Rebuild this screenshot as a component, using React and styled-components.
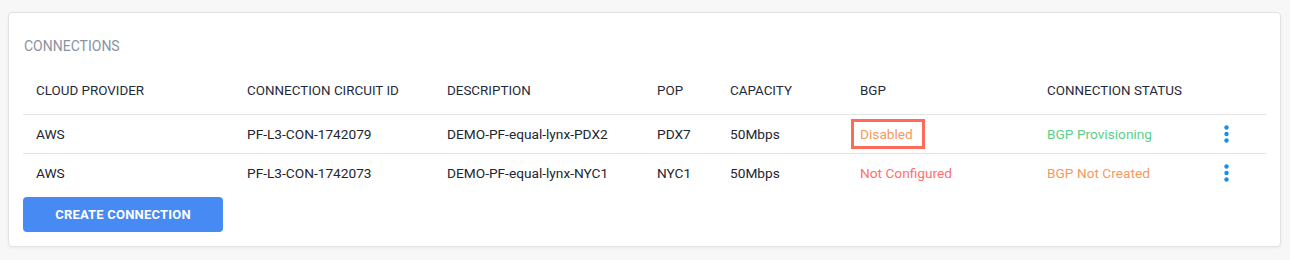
import React from "react";
import styled, { createGlobalStyle } from "styled-components";

const GlobalStyle = createGlobalStyle`
  body {
    margin: 0;
    background: #f7f7f7;
    font-family: Roboto, "Liberation Sans", sans-serif;
  }
`;

const connections = [
  {
    id: "PF-L3-CON-1742079",
    provider: "AWS",
    description: "DEMO-PF-equal-lynx-PDX2",
    pop: "PDX7",
    capacity: "50Mbps",
    bgp: "Disabled",
    bgpTone: "orange",
    highlight: true,
    status: "BGP Provisioning",
    statusTone: "green",
  },
  {
    id: "PF-L3-CON-1742073",
    provider: "AWS",
    description: "DEMO-PF-equal-lynx-NYC1",
    pop: "NYC1",
    capacity: "50Mbps",
    bgp: "Not Configured",
    bgpTone: "red",
    status: "BGP Not Created",
    statusTone: "orange",
  },
];

const tones = {
  orange: "#f7985c",
  red: "#ff6f6c",
  green: "#5ad08c",
};

const columns = "211px 200px 210px 73px 130px 187px 169px 63px";

function App() {
  return (
    <Page>
      <GlobalStyle />
      <Card>
        <Title>CONNECTIONS</Title>
        <HeaderRow>
          <HeadCell>CLOUD PROVIDER</HeadCell>
          <HeadCell>CONNECTION CIRCUIT ID</HeadCell>
          <HeadCell>DESCRIPTION</HeadCell>
          <HeadCell>POP</HeadCell>
          <HeadCell>CAPACITY</HeadCell>
          <HeadCell>BGP</HeadCell>
          <HeadCell>CONNECTION STATUS</HeadCell>
          <HeadCell />
        </HeaderRow>
        {connections.map((c, i) => (
          <Row key={c.id} $last={i === connections.length - 1}>
            <Cell>{c.provider}</Cell>
            <Cell>{c.id}</Cell>
            <Cell>{c.description}</Cell>
            <Cell>{c.pop}</Cell>
            <Cell>{c.capacity}</Cell>
            <Cell>
              <Status $tone={c.bgpTone} $boxed={c.highlight}>
                {c.bgp}
              </Status>
            </Cell>
            <Cell>
              <Status $tone={c.statusTone}>{c.status}</Status>
            </Cell>
            <Cell>
              <MenuButton aria-label="More">
                <svg width="5" height="18" viewBox="0 0 5 18">
                  <circle cx="2.5" cy="2.5" r="2.2" fill="#1a8fe6" />
                  <circle cx="2.5" cy="9" r="2.2" fill="#1a8fe6" />
                  <circle cx="2.5" cy="15.5" r="2.2" fill="#1a8fe6" />
                </svg>
              </MenuButton>
            </Cell>
          </Row>
        ))}
        <CreateButton>CREATE CONNECTION</CreateButton>
      </Card>
    </Page>
  );
}

//styled components
const Page = styled.div`
  padding: 12px 9px 13px 8px;
`;
const Card = styled.div`
  background: #fff;
  border: 1px solid #e3e3e3;
  border-radius: 4px;
  box-shadow: 0 1px 3px rgba(0, 0, 0, 0.06);
  padding: 23px 14px 14px 14px;
  height: 196px;
`;
const Title = styled.div`
  color: #8a93a3;
  font-size: 14px;
  line-height: 20px;
  padding-left: 1px;
  margin-bottom: 14px;
`;
const HeaderRow = styled.div`
  display: grid;
  grid-template-columns: ${columns};
  border-bottom: 1px solid #e4e4e4;
`;
const HeadCell = styled.div`
  padding: 11px 13px 13px;
  font-size: 13.4px;
  line-height: 20px;
  color: #1f2a3c;
  white-space: nowrap;
`;
const Row = styled.div`
  display: grid;
  grid-template-columns: ${columns};
  align-items: center;
  height: 37px;
  padding-bottom: 1px;
  border-bottom: ${(p) => (p.$last ? "none" : "1px solid #e4e4e4")};
`;
const Cell = styled.div`
  padding: 0 13px;
  font-size: 13.7px;
  color: #222630;
  white-space: nowrap;
  display: flex;
  align-items: center;
`;
const Status = styled.span`
  color: ${(p) => tones[p.$tone]};
  ${(p) =>
    p.$boxed &&
    `
    border: 3px solid #ff6b5a;
    padding: 4px 9px 4px 6px;
    margin-left: -9px;
  `}
`;
const MenuButton = styled.button`
  border: none;
  background: none;
  padding: 0;
  margin-left: 8px;
  display: flex;
  cursor: pointer;
`;
const CreateButton = styled.button`
  margin-top: 5px;
  width: 200px;
  height: 35px;
  border: none;
  border-radius: 4px;
  background: #488af3;
  color: #fff;
  font-family: Roboto, "Liberation Sans", sans-serif;
  font-weight: 700;
  font-size: 13px;
  letter-spacing: 0.2px;
  cursor: pointer;
`;

export default App;
